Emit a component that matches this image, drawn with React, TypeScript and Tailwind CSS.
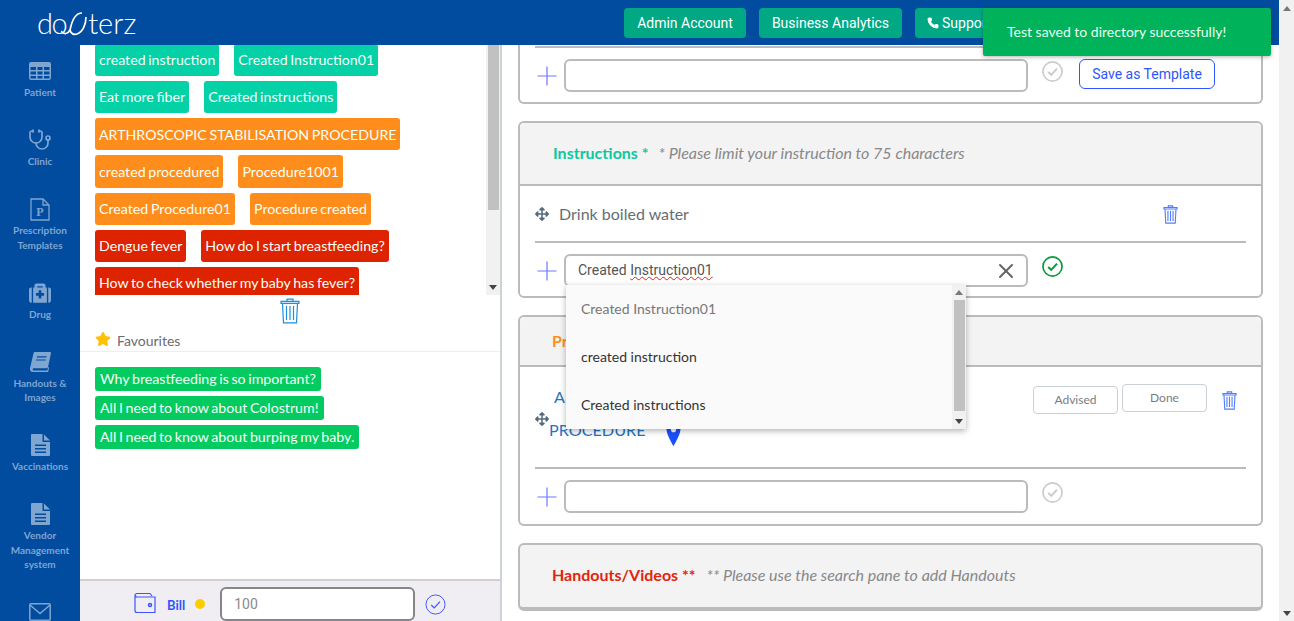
import { Phone, Stethoscope, X } from "lucide-react";
import { FaArrowsAlt, FaMedkit, FaStar } from "react-icons/fa";

const lato = "font-['Lato','Noto_Sans',sans-serif]";
const roboto = "font-['Roboto',sans-serif]";

const groups = [
	{ color: "bg-[#04d1a5]", items: ["created instruction", "Created Instruction01", "Eat more fiber", "Created instructions"] },
	{ color: "bg-[#ff8d1c]", items: ["ARTHROSCOPIC STABILISATION PROCEDURE", "created procedured", "Procedure1001", "Created Procedure01", "Procedure created"] },
	{ color: "bg-[#de2300]", items: ["Dengue fever", "How do I start breastfeeding?", "How to check whether my baby has fever?"] },
];

const favourites = [
	"Why breastfeeding is so important?",
	"All I need to know about Colostrum!",
	"All I need to know about burping my baby.",
];

const TableIcon = () => (
	<svg width="22" height="18" viewBox="0 0 22 18" fill="currentColor">
		<path
			fillRule="evenodd"
			d="M2 0h18a2 2 0 0 1 2 2v14a2 2 0 0 1-2 2H2a2 2 0 0 1-2-2V2a2 2 0 0 1 2-2zM1.500 5v3h5.500V5zm7 0v3h5V5zm6.500 0v3h5.500V5zM1.500 9.500v3h5.500v-3zm7 0v3h5v-3zm6.500 0v3h5.500v-3zM1.500 14v2.500h5.500V14zm7 0v2.500h5V14zm6.500 0v2.500h5.500V14z"
		/>
	</svg>
);

const PrescriptionIcon = () => (
	<svg width="20" height="23" viewBox="0 0 20 23" fill="none" stroke="currentColor" strokeWidth="1.3">
		<path d="M1 1h12l6 6v15H1z" />
		<path d="M13 1v6h6" />
		<text x="10" y="18" textAnchor="middle" fontSize="12" fontWeight="700" fontFamily="Liberation Serif" fill="currentColor" stroke="none">
			P
		</text>
	</svg>
);

const BookIcon = () => (
	<svg width="21" height="20" viewBox="0 0 21 20" fill="currentColor">
		<path
			fillRule="evenodd"
			d="M5 0h15a1 1 0 0 1 1 1.200l-3 13.800a1.500 1.500 0 0 1-1.500 1.200H3.500a1.300 1.300 0 0 0 0 2.400h13.800l.9-3.500.9.4-1 4.500H3a3 3 0 0 1-3-3.300c0-.6.1-1.100.3-1.600L3.500 1.200A1.600 1.600 0 0 1 5 0zm2 4.200l-.3 1.200h9.600l.3-1.200zm-.8 3.200l-.3 1.200h9.600l.3-1.200z"
		/>
	</svg>
);

const FileIcon = () => (
	<svg width="19" height="22" viewBox="0 0 19 22" fill="currentColor">
		<path d="M13 .5l6 6h-6z" />
		<path
			fillRule="evenodd"
			d="M0 1a1 1 0 0 1 1-1h10.500v8H19v13a1 1 0 0 1-1 1H1a1 1 0 0 1-1-1zm4 9.500v1.500h11v-1.500zm0 3.500v1.500h11V14zm0 3.500V19h11v-1.500z"
		/>
	</svg>
);

const MailIcon = () => (
	<svg width="22" height="18" viewBox="0 0 22 18" fill="none" stroke="currentColor" strokeWidth="1.500">
		<rect x="0.800" y="0.800" width="20.400" height="16.400" rx="1" />
		<path d="M1 2l10 8.500L21 2" />
	</svg>
);

const nav = [
	{ label: ["Patient"], icon: <TableIcon /> },
	{ label: ["Clinic"], icon: <Stethoscope size={24} strokeWidth={1.7} /> },
	{ label: ["Prescription", "Templates"], icon: <PrescriptionIcon /> },
	{ label: ["Drug"], icon: <FaMedkit size={22} /> },
	{ label: ["Handouts &", "Images"], icon: <BookIcon /> },
	{ label: ["Vaccinations"], icon: <FileIcon /> },
	{ label: ["Vendor", "Management", "system"], icon: <FileIcon /> },
	{ label: [], icon: <MailIcon /> },
];

const TrashIcon = ({ className, stroke = 1.2 }: { className: string; stroke?: number }) => (
	<svg className={className} viewBox="0 0 20 26" fill="none" stroke="currentColor" strokeWidth={stroke}>
		<path d="M7 3V1.200h6V3M1 3.400h18v2H1zM2.500 5.500l1 19.300h13l1-19.300" />
		<path d="M6.500 8v14M10 8v14M13.500 8v14" />
	</svg>
);

const CheckCircle = ({ className, stroke = 1.8 }: { className: string; stroke?: number }) => (
	<svg className={className} viewBox="0 0 22 22" fill="none" stroke="currentColor">
		<circle cx="11" cy="11" r="10" strokeWidth={stroke} />
		<path d="M6.500 11.500l3.200 3 6-6.500" strokeWidth={stroke + 0.3} />
	</svg>
);

const PlusIcon = () => (
	<svg className="ml-[16px] shrink-0" width="22" height="22" viewBox="0 0 22 22" stroke="#6f76ff" strokeWidth="1.200">
		<path d="M11 1.500v19M1.500 11h19" />
	</svg>
);

const MoveIcon = ({ className }: { className: string }) => <FaArrowsAlt size={14} className={`shrink-0 text-[#566a7c] ${className}`} />;

const Logo = () => (
	<div className="flex items-center text-[29px] font-light leading-none text-white font-['Lato',sans-serif]">
		<span className="tracking-[-1.500px]">do</span>
		<svg width="28" height="24" viewBox="0 0 28 24" fill="none" stroke="currentColor" strokeWidth="1.700" className="-ml-[5px] mt-[2px] shrink-0">
			<path d="M0 19C3 23 7 22 9 18C11 8 15 1 21 1" />
			<path d="M9 18C10 22 13 23 16 22C22 20 25 12 25 5" />
		</svg>
		<span className="-ml-[1px]">terz</span>
	</div>
);

const AddRow = ({ checkClass }: { checkClass: string }) => (
	<div className="flex items-center">
		<PlusIcon />
		<div className="ml-[6px] h-[33px] w-[464px] rounded-md border-2 border-[#bbbbbb] bg-white" />
		<CheckCircle className={checkClass} />
	</div>
);

const ScrollArrow = ({ up }: { up?: boolean }) => (
	<div className={up ? "h-0 w-0 border-x-[4px] border-b-[5px] border-x-transparent border-b-[#777]" : "h-0 w-0 border-x-[4px] border-t-[5px] border-x-transparent border-t-[#444]"} />
);

export default function App() {
	return (
		<div className={`relative flex h-screen w-full overflow-hidden bg-white ${lato}`}>
			<div className="flex min-w-0 flex-1 flex-col">
				<header className="flex h-[45px] shrink-0 bg-[#014c9f]">
					<div className="flex w-[624px] shrink-0 items-center pl-[37px]">
						<Logo />
					</div>
					<div className={`flex gap-[13px] pt-[8px] text-[14px] text-white ${roboto}`}>
						<button className="h-[30px] w-[122px] rounded-[4px] bg-[#00a884]">Admin Account</button>
						<button className="h-[30px] w-[143px] rounded-[4px] bg-[#00a884]">Business Analytics</button>
						<button className="flex h-[30px] w-[120px] items-center gap-[3px] rounded-[4px] bg-[#00a884] pl-[12px]">
							<Phone size={12} fill="currentColor" />
							Support
						</button>
					</div>
				</header>

				<div className="flex min-h-0 flex-1">
					<aside className="flex w-[80px] shrink-0 flex-col items-center gap-[29.500px] overflow-hidden bg-[#014c9f] pt-[15px] text-[#7fa5d1]">
						{nav.map((item, i) => (
							<div key={i} className="flex w-full shrink-0 flex-col items-center">
								<div className="flex h-[22px] items-center justify-center">{item.icon}</div>
								<div className="mt-[3px] text-center text-[10px] font-bold leading-[14.500px]">
									{item.label.map((l) => (
										<div key={l}>{l}</div>
									))}
								</div>
							</div>
						))}
					</aside>

					<section className="flex w-[422px] shrink-0 flex-col border-r-2 border-[#ccd3d3]">
						<div className="flex h-[250px] shrink-0 overflow-hidden">
							<div className="flex w-[406px] flex-col gap-[5px] pl-[15px] -mt-[1.250px]">
								{groups.map((g) => (
									<div key={g.color} className="flex flex-wrap gap-x-[15px] gap-y-[5px]">
										{g.items.map((t) => (
											<span key={t} className={`flex h-[32.200px] items-center whitespace-nowrap rounded-[3px] px-[4px] text-[14.200px] [word-spacing:-1px] text-[#f4fff8] ${g.color}`}>
												{t}
											</span>
										))}
									</div>
								))}
							</div>
							<div className="flex w-[14px] flex-col items-center bg-[#f1f1f1]">
								<div className="h-[165px] w-[11px] bg-[#c1c1c1]" />
								<div className="mb-[5px] mt-auto">
									<ScrollArrow />
								</div>
							</div>
						</div>
						<div className="flex h-[32px] justify-start pl-[200px] pt-[3px]">
							<TrashIcon className="h-[26px] w-[20px] text-[#1b8fe0]" />
						</div>
						<div className="flex h-[25px] items-start gap-[6px] border-b border-[#eeeeee] pl-[15px]">
							<FaStar size={16} className="mt-[4px] text-[#ffc107]" />
							<span className="mt-[6px] text-[14px] leading-[16px] text-[#6b6b72]">Favourites</span>
						</div>
						<div className="flex flex-1 flex-col items-start gap-[5px] pl-[15px] pt-[15px]">
							{favourites.map((t) => (
								<span key={t} className="flex h-[24px] items-center whitespace-nowrap rounded-[3px] bg-[#04cb60] px-[5px] pb-[1px] text-[14.200px] [word-spacing:-1px] text-[#f4fff8]">
									{t}
								</span>
							))}
						</div>
						<div className="flex h-[42px] shrink-0 items-start border-t-2 border-[#cfcfcf] bg-[#f0eef3] pt-[6px]">
							<svg className="ml-[54px] mt-[5px]" width="22" height="22" viewBox="0 0 22 22" fill="none" stroke="#3d55ff" strokeWidth="1.200">
								<path d="M1 3.500A2 2 0 0 1 3 1.500h13l2 2.500M1 3.500v15a2 2 0 0 0 2 2h18V5H3a2 2 0 0 1-2-1.500" />
								<circle cx="16" cy="13" r="1.500" strokeWidth="1.500" />
							</svg>
							<span className="ml-[11px] mt-[10px] text-[13px] font-bold leading-[16px] text-[#2f55ff]">Bill</span>
							<span className="ml-[10px] mt-[12px] h-[10px] w-[10px] rounded-full bg-[#ffcc00]" />
							<div className={`ml-[15px] flex h-[34px] w-[195px] items-center rounded-md border-2 border-[#85858a] bg-white pl-[12px] text-[14px] text-[#8a8a8a] ${roboto}`}>
								100
							</div>
							<CheckCircle className="ml-[10px] mt-[7px] h-[21px] w-[21px] text-[#3d55ff]" stroke={1} />
						</div>
					</section>

					<main className="flex min-w-0 flex-1 flex-col gap-[17px] px-[16px]">
						<div className="h-[59px] shrink-0 rounded-b-md border-x-2 border-b-2 border-[#bbbbbb] pt-[1px]">
							<div className="mx-[15px] h-[2px] bg-[#bbbbbb]" />
							<div className="mt-[11px] flex items-start">
								<AddRow checkClass="ml-[14px] -mt-[8px] h-[21px] w-[21px] text-[#cccccc]" />
								<button className={`ml-[16px] h-[30px] w-[136px] rounded-md border border-[#2f55ff] text-[14px] text-[#2f55ff] ${roboto}`}>
									Save as Template
								</button>
							</div>
						</div>

						<div className="relative h-[177px] shrink-0 rounded-md border-2 border-[#bbbbbb]">
							<div className="flex h-[63px] items-center rounded-t-md border-b-2 border-[#bbbbbb] bg-[#f3f3f3] pb-[2px] pl-[33px] text-[16px]">
								<span className="font-bold text-[#0cc8a0]">Instructions *</span>
								<span className="ml-[10px] italic text-[#888888]">* Please limit your instruction to 75 characters</span>
							</div>
							<div className="flex h-[55px] items-center pl-[15px] text-[#666d72]">
								<MoveIcon className="" />
								<span className="ml-[10px] text-[16px]">Drink boiled water</span>
								<TrashIcon className="ml-[474px] mt-[1px] h-[19px] w-[15px] text-[#4f7dff]" stroke={1.5} />
							</div>
							<div className="mx-[15px] h-[2px] bg-[#bbbbbb]" />
							<div className="mt-[11px] flex items-center">
								<PlusIcon />
								<div className={`ml-[6px] flex h-[33px] w-[464px] items-center rounded-md border-2 border-[#bbbbbb] bg-white pl-[12px] pr-[8px] text-[14px] text-[#555555] ${roboto}`}>
									Created&nbsp;<span className="underline decoration-[#e02020] decoration-wavy decoration-1">Instruction01</span>
									<X size={24} strokeWidth={2} className="ml-auto text-[#666666]" />
								</div>
								<CheckCircle className="ml-[14px] -mt-[8px] h-[21px] w-[21px] text-[#0a9a3a]" />
							</div>
							<div className="absolute left-[46px] top-[162px] z-10 flex h-[144px] w-[400px] bg-[#fafafa] text-[14px] shadow-[0_2px_6px_rgba(0,0,0,0.3)]">
								<div className="flex flex-1 flex-col">
									<div className="flex h-[48px] items-center pb-[2px] pl-[15px] text-[#777777]">Created Instruction01</div>
									<div className="flex h-[48px] items-center pb-[2px] pl-[15px] text-[#333333]">created instruction</div>
									<div className="flex h-[48px] items-center pb-[2px] pl-[15px] text-[#333333]">Created instructions</div>
								</div>
								<div className="flex w-[14px] flex-col items-center bg-[#f1f1f1] pt-[5px]">
									<ScrollArrow up />
									<div className="mt-[5px] h-[111px] w-[11px] bg-[#c1c1c1]" />
									<div className="mt-[8px]">
										<ScrollArrow />
									</div>
								</div>
							</div>
						</div>

						<div className="h-[211px] shrink-0 rounded-md border-2 border-[#bbbbbb]">
							<div className="flex h-[50px] items-center rounded-t-md border-b-2 border-[#bbbbbb] bg-[#f3f3f3] pl-[32px] text-[16px] font-bold text-[#ff8d1c]">
								Procedure *
							</div>
							<div className="flex h-[100px]">
								<MoveIcon className="ml-[15px] mt-[45px]" />
								<div className="-ml-[7px] mt-[13px] w-[491px] shrink-0 text-[16.200px] leading-[33px] text-[#1f75c4]">
									<div className="pl-[12px]">ARTHROSCOPIC STABILISATION</div>
									<div className="flex items-center pl-[7px]">
										PROCEDURE
										<svg className="ml-[20px] mt-[7px]" width="15" height="25" viewBox="0 0 14 20" preserveAspectRatio="none" fill="#1a4fff">
											<path fillRule="evenodd" d="M7 0a6.500 6.500 0 0 0-6.500 6.500C.5 11 7 20 7 20s6.500-9 6.500-13.500A6.500 6.500 0 0 0 7 0zm0 9a2.500 2.500 0 1 1 0-5 2.500 2.500 0 0 1 0 5z" />
										</svg>
									</div>
								</div>
								<div className="mt-[17px] flex items-start gap-[4px] text-[12px] text-[#777d85]">
									<span className="mt-[2px] flex h-[28px] w-[85px] items-center justify-center rounded-[4px] border border-[#c9d0d6]">Advised</span>
									<span className="flex h-[28px] w-[85px] items-center justify-center rounded-[4px] border border-[#c9d0d6]">Done</span>
									<TrashIcon className="ml-[11px] mt-[7px] h-[19px] w-[15px] text-[#4f7dff]" stroke={1.5} />
								</div>
							</div>
							<div className="mx-[15px] h-[2px] bg-[#bbbbbb]" />
							<div className="mt-[11px]">
								<AddRow checkClass="ml-[14px] -mt-[9px] h-[21px] w-[21px] text-[#cccccc]" />
							</div>
						</div>

						<div className="flex h-[68px] shrink-0 items-center rounded-md border-2 border-b-4 border-[#bbbbbb] bg-[#f3f3f3] pb-[2px] pl-[32px] text-[16px]">
							<span className="font-bold text-[#e0250c]">Handouts/Videos **</span>
							<span className="ml-[11px] italic text-[#888888]">** Please use the search pane to add Handouts</span>
						</div>
					</main>
				</div>
			</div>

			<div className="flex w-[15px] shrink-0 flex-col items-center justify-between bg-[#f1f1f1] pb-[5px] pt-[6px]">
				<ScrollArrow up />
				<ScrollArrow />
			</div>

			<div className="absolute left-[983px] top-[8px] z-20 flex h-[48px] w-[288px] items-center rounded-[2px] bg-[#00b259] pb-[2px] pl-[24px] text-[14px] text-[#e8fff2] shadow-[0_1px_4px_rgba(0,0,0,0.3)]">
				Test saved to directory successfully!
			</div>
		</div>
	);
}
